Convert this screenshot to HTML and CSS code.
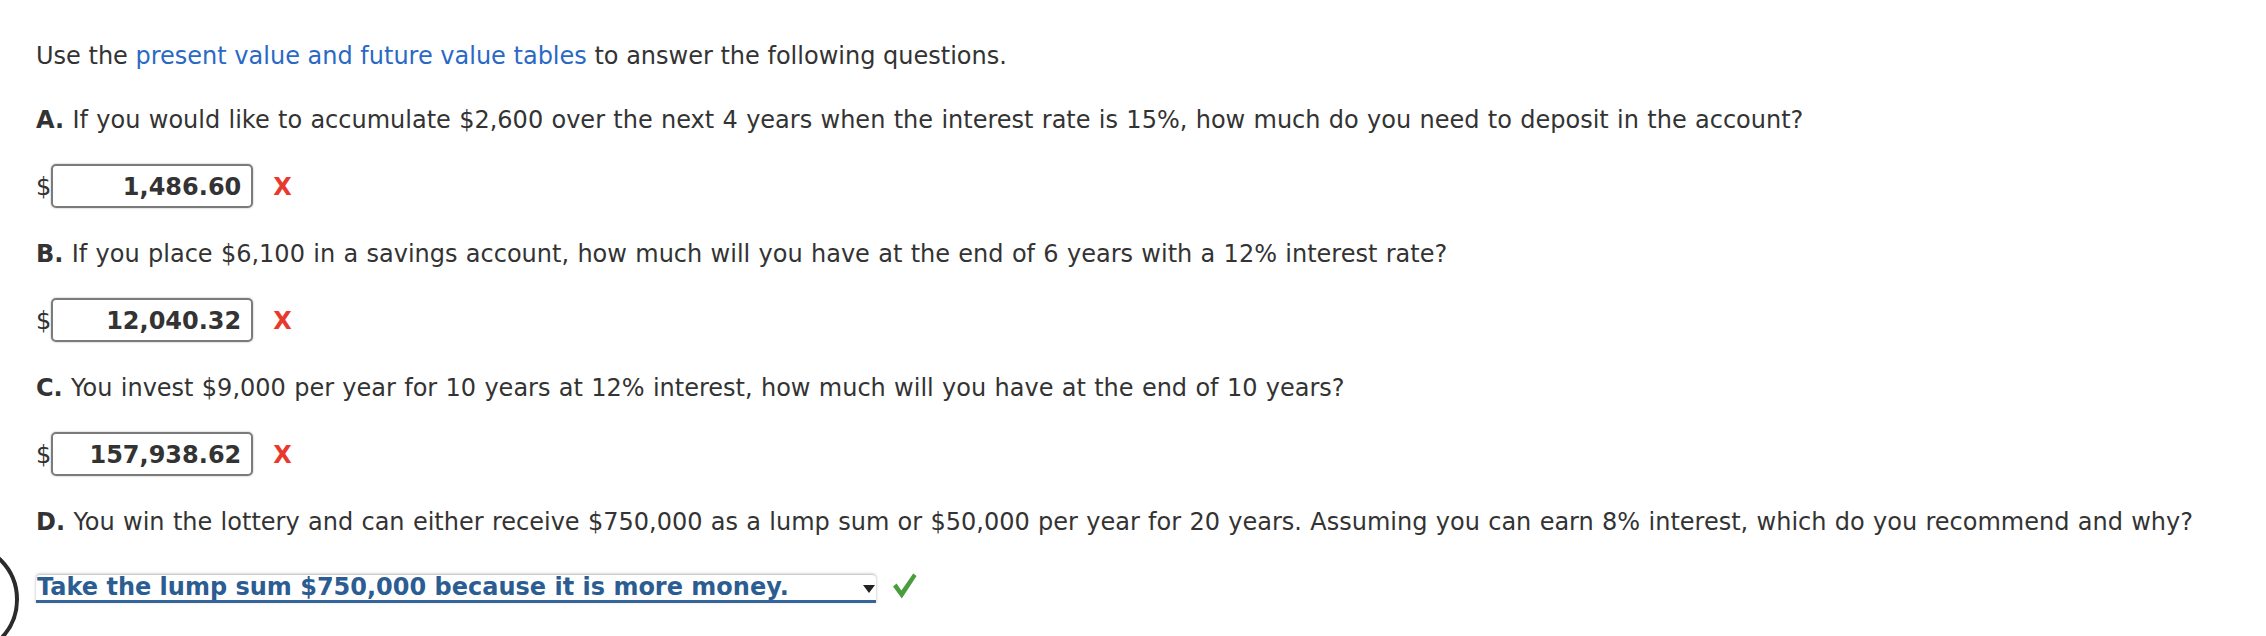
FILE: index.html
```html
<!DOCTYPE html>
<html>
<head>
<meta charset="utf-8">
<link rel="stylesheet" href="styles.css">
</head>
<body>
<div class="page">
  <p class="line">Use the <a class="link" href="#">present value and future value tables</a> to answer the following questions.</p>

  <p class="line q"><b>A.</b> If you would like to accumulate $2,600 over the next 4 years when the interest rate is 15%, how much do you need to deposit in the account?</p>
  <div class="answer">
    <span class="cur">$</span><span class="box">1,486.60</span><span class="wrong">X</span>
  </div>

  <p class="line q2"><b>B.</b> If you place $6,100 in a savings account, how much will you have at the end of 6 years with a 12% interest rate?</p>
  <div class="answer">
    <span class="cur">$</span><span class="box">12,040.32</span><span class="wrong">X</span>
  </div>

  <p class="line q2"><b>C.</b> You invest $9,000 per year for 10 years at 12% interest, how much will you have at the end of 10 years?</p>
  <div class="answer">
    <span class="cur">$</span><span class="box">157,938.62</span><span class="wrong">X</span>
  </div>

  <p class="line q2"><b>D.</b> You win the lottery and can either receive $750,000 as a lump sum or $50,000 per year for 20 years. Assuming you can earn 8% interest, which do you recommend and why?</p>
  <div class="choice-row">
    <div class="select">
      <span class="select-text">Take the lump sum $750,000 because it is more money.</span>
      <svg class="arrow" width="12" height="8" viewBox="0 0 12 8"><polygon points="0,0 12,0 6,8" fill="#222"/></svg>
    </div>
    <svg class="check" width="24" height="26" viewBox="0 0 24 26"><polygon points="0,13.5 3.6,10.5 8.4,17.4 20.2,0.4 23.6,3 8.8,25.4" fill="#4a9c3c"/></svg>
  </div>

  <div class="ring"></div>
</div>
</body>
</html>
```

FILE: styles.css
```css
html, body {
  margin: 0;
  padding: 0;
  background: #ffffff;
  overflow: hidden;
}

.page {
  position: relative;
  box-sizing: border-box;
  height: 636px;
  overflow: hidden;
  padding: 41.5px 0 0 36px;
  font-family: "DejaVu Sans", Verdana, sans-serif;
  font-size: 24px;
  color: #333333;
}

.line {
  margin: 0;
  line-height: 29px;
  white-space: nowrap;
}

.line b {
  font-weight: bold;
}

.q {
  margin-top: 35.5px;
  word-spacing: 0.7px;
}

.q2 {
  margin-top: 32.5px;
  word-spacing: 0.7px;
}

.link {
  color: #2a69c4;
  text-decoration: none;
}

.answer {
  display: flex;
  align-items: baseline;
  margin-top: 28.5px;
}

.cur {
  line-height: 29px;
}

.box {
  box-sizing: border-box;
  width: 202px;
  height: 44px;
  padding: 2px 10px 0 10px;
  line-height: 38px;
  border: 2px solid #7b7b7b;
  border-radius: 5px;
  box-shadow: 0 0 2px rgba(0, 0, 0, 0.35);
  text-align: right;
  font-weight: bold;
  color: #333333;
}

.wrong {
  margin-left: 20px;
  font-weight: bold;
  color: #e8392c;
  line-height: 29px;
}

.choice-row {
  display: flex;
  align-items: flex-start;
  height: 44px;
  margin-top: 29px;
}

.select {
  box-sizing: border-box;
  width: 840px;
  height: 28px;
  margin-top: 9px;
  display: flex;
  justify-content: space-between;
  align-items: center;
  padding: 0 1px 0 1px;
  background: #ffffff;
  border-bottom: 3px solid #35659a;
  border-radius: 4px 4px 0 0;
  box-shadow: 0 -1px 3px rgba(0, 0, 0, 0.3);
}

.select-text {
  font-weight: bold;
  color: #2c5d92;
  line-height: 25px;
}

.arrow {
  display: block;
  margin-top: 2px;
}

.check {
  display: block;
  margin-left: 17px;
  margin-top: 7px;
}

.ring {
  position: absolute;
  left: -96px;
  top: 542px;
  width: 107px;
  height: 107px;
  border: 4px solid #2b2b2b;
  border-radius: 50%;
}
```
